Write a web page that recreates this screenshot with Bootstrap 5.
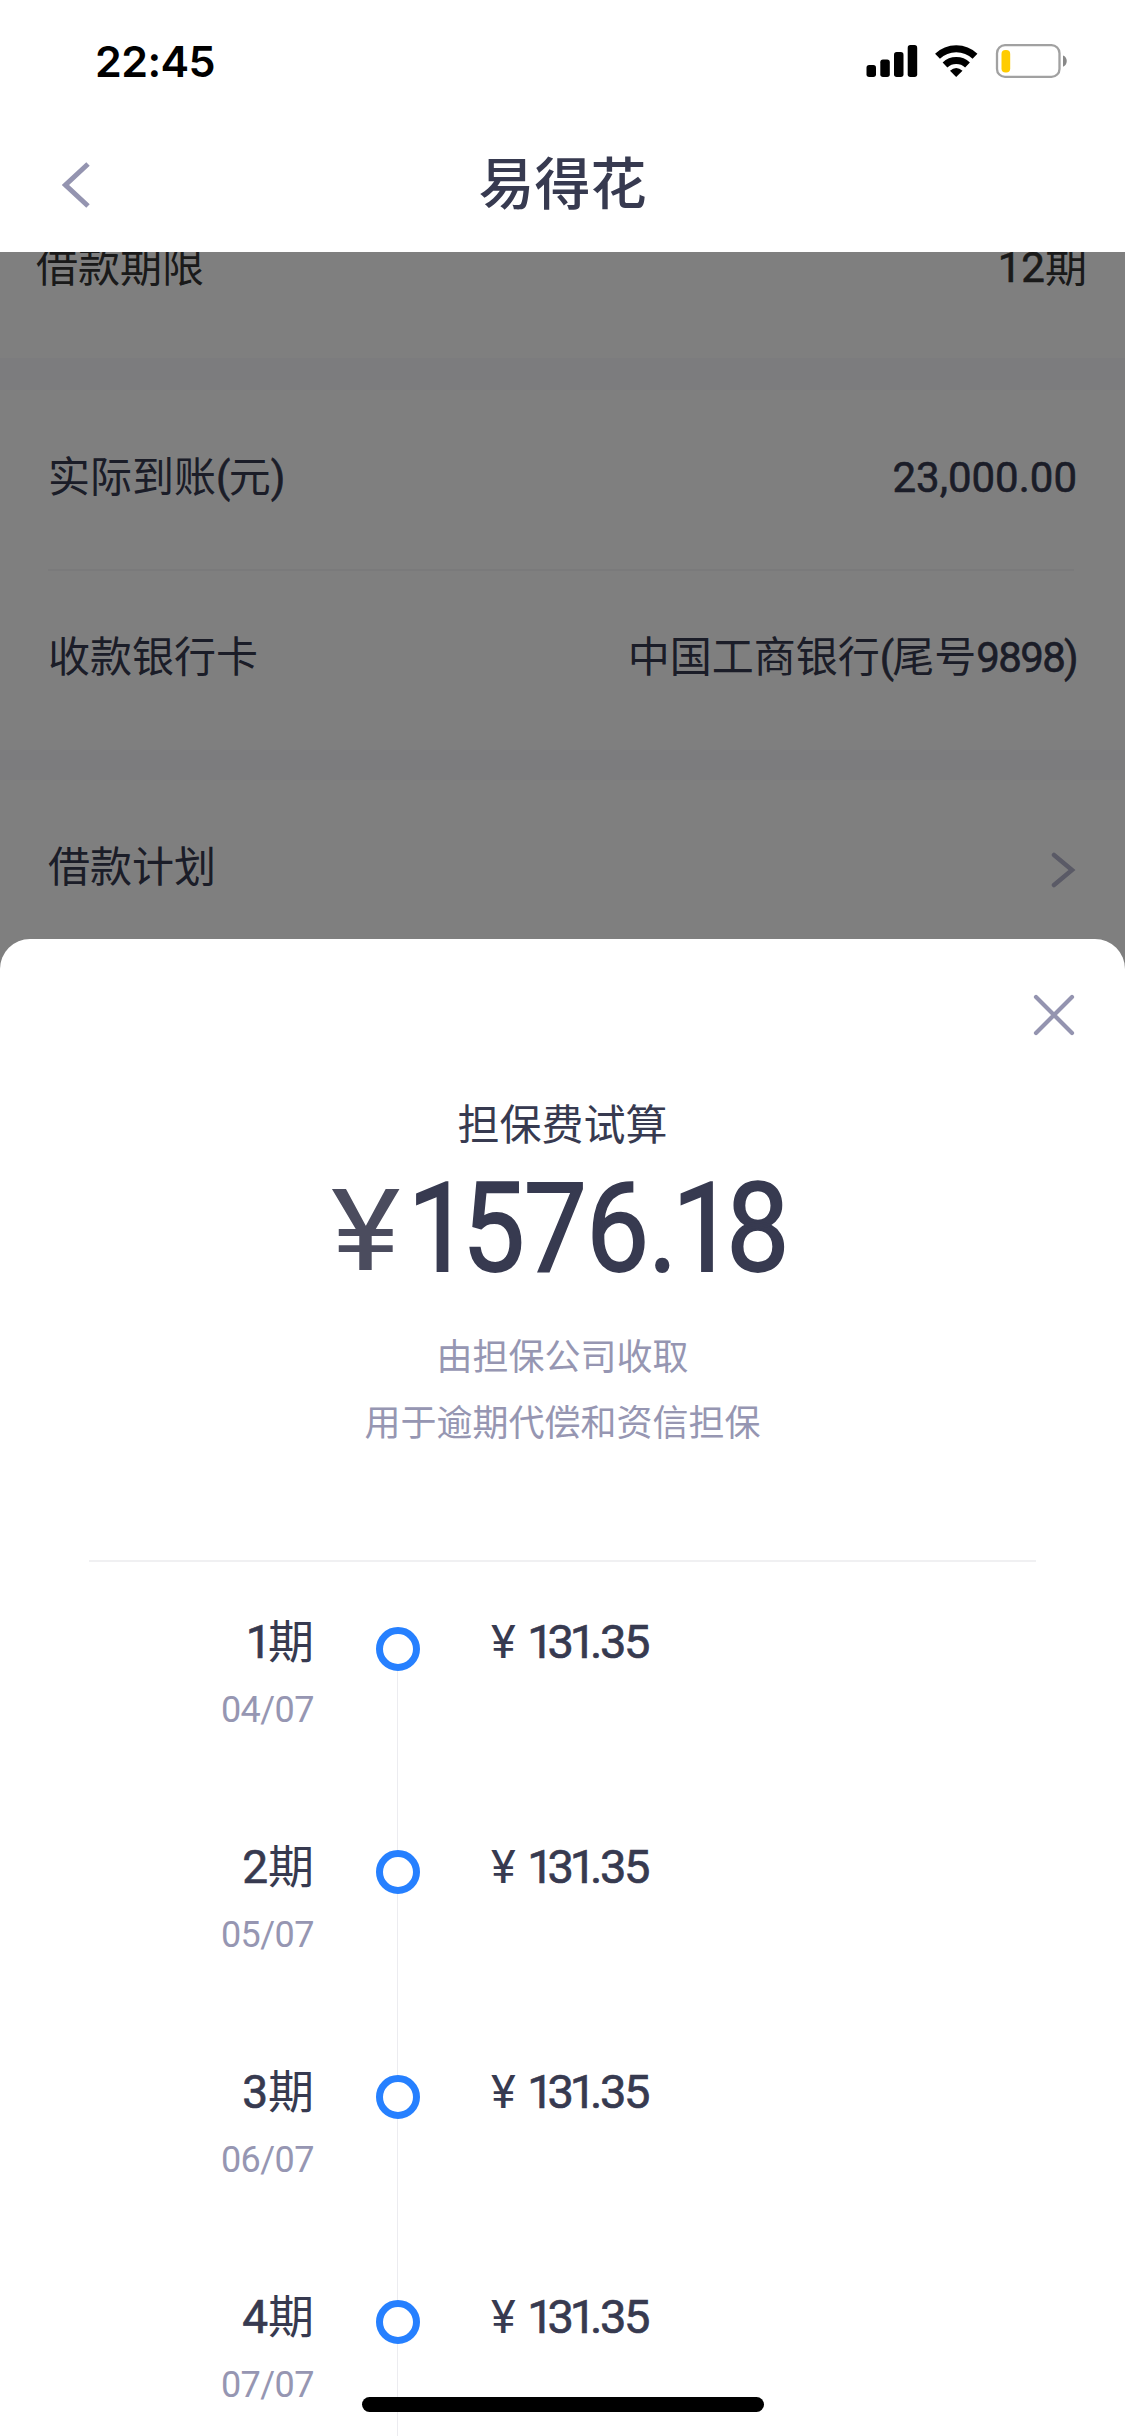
<!DOCTYPE html>
<html lang="zh-CN">
<head>
<meta charset="utf-8">
<meta name="viewport" content="width=device-width, initial-scale=1">
<title>易得花</title>
<link href="https://cdn.jsdelivr.net/npm/bootstrap@5.3.0/dist/css/bootstrap.min.css" rel="stylesheet">
<style>
  body { width: 1125px; height: 2436px; overflow: hidden; background: #fff; color: #373a50;
    font-family: Roboto, "Noto Sans CJK SC", sans-serif; font-size: 42px; line-height: 1; }
  svg { display: block; flex: none; }
  .status-bar { height: 122px; padding: 0 58px 0 95px; }
  .clock { font: 600 43px/1 Inter, sans-serif; letter-spacing: -.6px; color: #000; }
  .title-bar { height: 130px; padding: 0 0 4px 62px; }
  .title-bar h1 { font-size: 56px; font-weight: 500; line-height: 1; padding-right: 90px; }
  .loan-page { height: 727px; }
  .veil { background: rgba(0,0,0,.5); }
  .term-row { height: 106px; padding: 0 38px 0 36px; color: #343434; }
  .term-row > span { margin-top: -75px; }
  .gap-band { height: 32px; background: #f8f8fc; }
  .gap-band.slim { height: 30px; }
  .loan-row { height: 180px; padding: 0 48px 4px 48px; }
  .loan-rule { height: 2px; margin: -1px 51px -1px 48px; background: #f4f4f7; }
  .sheet { height: 1497px; margin-top: -40px; border-radius: 30px 30px 0 0; background: #fff; }
  .sheet-close { padding: 55px 50px 0; height: 166px; }
  .fee-total { height: 158px; padding: 7px 0 0 331px; }
  .fee-number { font-size: 125px; line-height: 150px; letter-spacing: -.01em; transform: scaleX(.9); transform-origin: left; margin-left: 21px; }
  .fee-number .one { margin-right: -.07em; }
  .yen-big { font-size: 114px; line-height: 154px; color: #4b4c5e; transform: scaleX(1.16); transform-origin: left; }
  .one { margin-left: -.04em; margin-right: -.08em; }
  .muted { color: #9696b2; }
  .fee-note { font-size: 36px; line-height: 66px; padding-top: 20px; }
  .sheet-rule { height: 2px; margin: 103px 89px 0; background: #f0f0f2; }
  .plan-row { height: 225px; }
  .plan-date { width: 314px; }
  .period { font-size: 46px; height: 46px; line-height: 46px; }
  .day { font-size: 36px; height: 36px; margin-top: 27px; letter-spacing: -.015em; }
  .num { -webkit-text-stroke: .014em currentColor; }
  .tight { letter-spacing: -.04em; }
  .rail { width: 44px; margin-left: 62px; margin-right: 71px; }
  .rail-line { width: 1px; height: 225px; left: 21px; top: 26px; background: #ececf0; }
  .dot { width: 44px; height: 44px; margin-top: 6px; border: 7px solid #2680ff; border-radius: 50%; background: #fff; }
  .plan-row:first-child .dot { margin-top: 8px; }
  .amount { font-size: 47px; line-height: 46px; letter-spacing: -.05em; }
  .yen { display: inline-block; width: 38px; letter-spacing: 0; -webkit-text-stroke: 0; }
  .plan { padding-top: 57px; }
  .home-bar { left: 362px; top: 2397px; width: 402px; height: 15px; border-radius: 8px; background: #000; }
</style>
<script src="https://cdn.jsdelivr.net/npm/bootstrap@5.3.0/dist/js/bootstrap.bundle.min.js"></script>
</head>
<body class="position-relative">
<header class="bg-white position-relative z-1">
  <div class="status-bar d-flex align-items-center justify-content-between">
    <span class="clock">22:45</span>
    <svg width="202" height="36" viewBox="865 43 202 36">
      <g fill="#000"><rect x="866.5" y="65" width="9.5" height="12" rx="2.7"/><rect x="880.3" y="59.5" width="9.5" height="17.5" rx="2.7"/><rect x="894" y="52" width="9.5" height="25" rx="2.7"/><rect x="907.7" y="45" width="9.5" height="32" rx="2.7"/></g>
      <g fill="none" stroke="#000" stroke-width="7"><path d="M937.5 56.2A27 27 0 0 1 975 56.2"/><path d="M945 65A16.5 16.5 0 0 1 967.500 65"/></g>
      <path d="M956.200 77L950 70.700Q956.200 65.300 962.500 70.700Z"/>
      <rect x="997" y="45.200" width="62.500" height="31.700" rx="8" fill="none" stroke="#a1a1a1" stroke-width="2.300"/>
      <rect x="1001.500" y="50" width="8.700" height="22.500" rx="4" fill="#fc0"/>
      <path d="M1063 55.500C1068 57 1068 65 1063 66.700Z" fill="#888"/>
    </svg>
  </div>
  <div class="title-bar d-flex align-items-center">
    <svg width="28" height="46" viewBox="0 0 28 46"><path d="M26 2L3.500 23L26 44" fill="none" stroke="#9494b0" stroke-width="5"/></svg>
    <h1 class="mb-0 flex-fill text-center">易得花</h1>
  </div>
</header>
<main>
  <section class="loan-page position-relative">
    <div class="term-row d-flex justify-content-between align-items-center overflow-hidden"><span>借款期限</span><span><span class="num">12</span>期</span></div>
    <div class="gap-band"></div>
    <div class="loan-row d-flex justify-content-between align-items-center"><span>实际到账<span class="num tight">(</span>元<span class="num">)</span></span><span class="num">23,000.00</span></div>
    <div class="loan-rule"></div>
    <div class="loan-row d-flex justify-content-between align-items-center"><span>收款银行卡</span><span>中国工商银行<span class="num tight">(</span>尾号<span class="num tight">9898)</span></span></div>
    <div class="gap-band slim"></div>
    <div class="loan-row d-flex justify-content-between align-items-center"><span>借款计划</span>
      <svg class="mt-1" width="26" height="36" viewBox="0 0 26 36"><path d="M3 3L21 18L3 33" fill="none" stroke="#b4b4cc" stroke-width="4.500" stroke-linecap="round"/></svg></div>
    <div class="veil position-absolute top-0 bottom-0 start-0 end-0"></div>
  </section>
  <section class="sheet position-relative overflow-hidden">
    <div class="sheet-close d-flex justify-content-end">
      <svg width="42" height="42" viewBox="0 0 42 42"><path d="M3 3L39 39M39 3L3 39" stroke="#9494b0" stroke-width="4.200" stroke-linecap="round"/></svg>
    </div>
    <div class="text-center">担保费试算</div>
    <div class="fee-total d-flex"><span class="yen-big">¥</span><span class="fee-number num"><span class="one">1</span>576.<span class="one">1</span>8</span></div>
    <div class="fee-note muted text-center"><div>由担保公司收取</div><div>用于逾期代偿和资信担保</div></div>
    <div class="sheet-rule"></div>
    <div class="plan">
      <div class="plan-row d-flex">
        <div class="plan-date text-end"><div class="period"><span class="num one">1</span>期</div><div class="day muted">04/07</div></div>
        <div class="rail position-relative"><div class="rail-line position-absolute"></div><div class="dot position-relative z-1"></div></div>
        <div class="amount num"><span class="yen">¥</span><span class="one">1</span>3<span class="one">1</span>.35</div>
      </div>
      <div class="plan-row d-flex">
        <div class="plan-date text-end"><div class="period"><span class="num">2</span>期</div><div class="day muted">05/07</div></div>
        <div class="rail position-relative"><div class="rail-line position-absolute"></div><div class="dot position-relative z-1"></div></div>
        <div class="amount num"><span class="yen">¥</span><span class="one">1</span>3<span class="one">1</span>.35</div>
      </div>
      <div class="plan-row d-flex">
        <div class="plan-date text-end"><div class="period"><span class="num">3</span>期</div><div class="day muted">06/07</div></div>
        <div class="rail position-relative"><div class="rail-line position-absolute"></div><div class="dot position-relative z-1"></div></div>
        <div class="amount num"><span class="yen">¥</span><span class="one">1</span>3<span class="one">1</span>.35</div>
      </div>
      <div class="plan-row d-flex">
        <div class="plan-date text-end"><div class="period"><span class="num">4</span>期</div><div class="day muted">07/07</div></div>
        <div class="rail position-relative"><div class="rail-line position-absolute"></div><div class="dot position-relative z-1"></div></div>
        <div class="amount num"><span class="yen">¥</span><span class="one">1</span>3<span class="one">1</span>.35</div>
      </div>
    </div>
  </section>
</main>
<div class="home-bar position-absolute"></div>
</body>
</html>
